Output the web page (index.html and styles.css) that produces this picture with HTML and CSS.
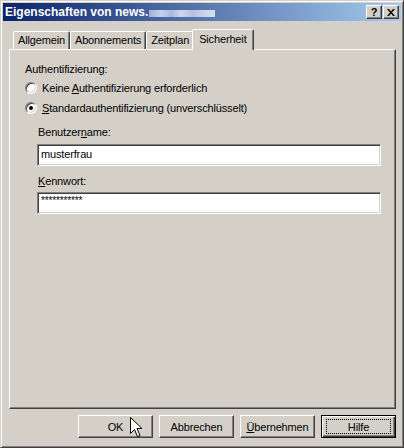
FILE: index.html
```
<!DOCTYPE html>
<html lang="de">
<head>
    <meta charset="UTF-8">
    <title>Eigenschaften von news</title>
    <link rel="stylesheet" href="styles.css">
</head>
<body>
    <div class="window">
        <div class="titlebar">
            <span class="title">Eigenschaften von news.<span class="blur"></span></span>
            <div class="caption-buttons">
                <div class="cap-btn help">?</div>
                <div class="cap-btn close">
                    <svg width="8" height="7" viewBox="0 0 8 7">
                        <path d="M0 0h2l2 2.5L6 0h2L5 3.5 8 7H6L4 4.5 2 7H0l3-3.5z" fill="#000"/>
                    </svg>
                </div>
            </div>
        </div>

        <div class="tabs">
            <div class="tab">Allgemein</div>
            <div class="tab">Abonnements</div>
            <div class="tab">Zeitplan</div>
            <div class="tab active">Sicherheit</div>
        </div>

        <div class="panel">
            <div class="heading">Authentifizierung:</div>
            <div class="radio-row">
                <span class="radio"></span>
                <span>Keine <u>A</u>uthentifizierung erforderlich</span>
            </div>
            <div class="radio-row">
                <span class="radio checked"></span>
                <span><u>S</u>tandardauthentifizierung (unverschlüsselt)</span>
            </div>

            <div class="credentials">
                <div class="field-label">Benutzer<u>n</u>ame:</div>
                <div class="textbox">musterfrau</div>
                <div class="field-label second"><u>K</u>ennwort:</div>
                <div class="textbox password">***********</div>
            </div>
        </div>

        <div class="buttons">
            <div class="btn">OK</div>
            <div class="btn">Abbrechen</div>
            <div class="btn"><u>Ü</u>bernehmen</div>
            <div class="btn default"><span class="focus">Hilfe</span></div>
        </div>

        <!-- mouse pointer over the OK button -->
        <svg class="cursor" width="13" height="21" viewBox="0 0 13 21">
            <path d="M0.5 0.5V16.5L4.5 12.5L7.5 19.5L10 18.5L7 11.5H12Z" fill="#fff" stroke="#000" stroke-width="1"/>
        </svg>
    </div>
</body>
</html>
```

FILE: styles.css
```
body {
    margin: 0;
    background-color: #d4d0c8;
    font-family: "Liberation Sans", Arial, sans-serif;
    font-size: 11px;
    letter-spacing: -0.15px;
    color: #000;
}

.window {
    position: relative;
    width: 404px;
    height: 448px;
    box-sizing: border-box;
    padding: 2px;
    background-color: #d4d0c8;
    border: 1px solid;
    border-color: #d4d0c8 #404040 #404040 #d4d0c8;
    box-shadow: inset 1px 1px #fff, inset -1px -1px #808080;
}

.titlebar {
    height: 18px;
    display: flex;
    align-items: center;
    justify-content: space-between;
    padding: 0 2px;
    background: linear-gradient(to right, #0a246a, #a6caf0);
}

.title {
    display: flex;
    align-items: center;
    color: #fff;
    font-weight: bold;
    font-size: 12px;
    letter-spacing: 0;
}

.blur {
    display: inline-block;
    width: 66px;
    height: 7px;
    margin-left: 1px;
    margin-top: 2px;
    background: linear-gradient(to right, #9fb0d8 0, #c6d0ea 12px, #a9b8de 22px, #cdd6ec 32px, #b2c0e2 44px, #c9d3eb 54px, #d4dcef 66px);
}

.caption-buttons {
    display: flex;
    gap: 1px;
}

.cap-btn {
    width: 16px;
    height: 14px;
    box-sizing: border-box;
    display: flex;
    align-items: center;
    justify-content: center;
    background-color: #d4d0c8;
    border: 1px solid;
    border-color: #fff #404040 #404040 #fff;
    box-shadow: inset -1px -1px #808080;
}

.help {
    font-weight: bold;
    font-size: 11px;
    line-height: 12px;
}

.tabs {
    display: flex;
    align-items: flex-end;
    height: 21px;
    margin: 7px 0 0 8px;
    padding-left: 2px;
    position: relative;
    z-index: 1;
}

.tab {
    height: 18px;
    box-sizing: border-box;
    padding: 0 4px;
    line-height: 17px;
    border: 1px solid;
    border-bottom: none;
    border-color: #fff #404040 transparent #fff;
    box-shadow: inset -1px 0 #808080;
    border-radius: 2px 2px 0 0;
    background-color: #d4d0c8;
}

.tab.active {
    height: 21px;
    margin: 0 -2px -1px -2px;
    padding: 0 6px;
    line-height: 18px;
    position: relative;
}

.panel {
    height: 360px;
    margin: 0 5px 0 6px;
    box-sizing: border-box;
    padding: 13px 14px 0 15px;
    border: 1px solid;
    border-color: #fff #404040 #404040 #fff;
    box-shadow: inset -1px -1px #808080;
}

.heading {
    height: 13px;
    line-height: 13px;
    margin-bottom: 2px;
}

.radio-row {
    height: 20px;
    display: flex;
    align-items: center;
    gap: 5px;
}

.radio {
    position: relative;
    width: 12px;
    height: 12px;
    box-sizing: border-box;
    border-radius: 50%;
    background-color: #fff;
    border: 1px solid;
    border-color: #808080 #fff #fff #808080;
    box-shadow: inset 1px 1px #404040, inset -1px -1px #d4d0c8;
}

.radio.checked::after {
    content: "";
    position: absolute;
    left: 3px;
    top: 3px;
    width: 4px;
    height: 4px;
    border-radius: 50%;
    background-color: #000;
}

.credentials {
    padding: 8px 0 0 12px;
    width: 344px;
}

.field-label {
    height: 13px;
    line-height: 13px;
    padding-left: 1px;
    margin-bottom: 5px;
}

.field-label.second {
    margin-top: 9px;
    margin-bottom: 4px;
}

.textbox {
    height: 22px;
    box-sizing: border-box;
    padding: 2px 3px;
    line-height: 15px;
    background-color: #fff;
    border: 1px solid;
    border-color: #808080 #fff #fff #808080;
    box-shadow: inset 1px 1px #404040, inset -1px -1px #d4d0c8;
}

.password {
    font-size: 10px;
    line-height: 12px;
}

.buttons {
    display: flex;
    justify-content: flex-end;
    gap: 6px;
    margin: 6px 5px 0 0;
}

.btn {
    width: 75px;
    height: 23px;
    box-sizing: border-box;
    display: flex;
    align-items: center;
    justify-content: center;
    border: 1px solid;
    border-color: #fff #404040 #404040 #fff;
    box-shadow: inset -1px -1px #808080;
}

.btn.default {
    border: 1px solid #000;
    box-shadow: inset 1px 1px #fff, inset -1px -1px #404040, inset -2px -2px #808080;
}

.focus {
    width: 65px;
    height: 15px;
    box-sizing: border-box;
    display: flex;
    align-items: center;
    justify-content: center;
    border: 1px dotted #000;
}

.cursor {
    position: absolute;
    left: 129px;
    top: 416px;
}
```
